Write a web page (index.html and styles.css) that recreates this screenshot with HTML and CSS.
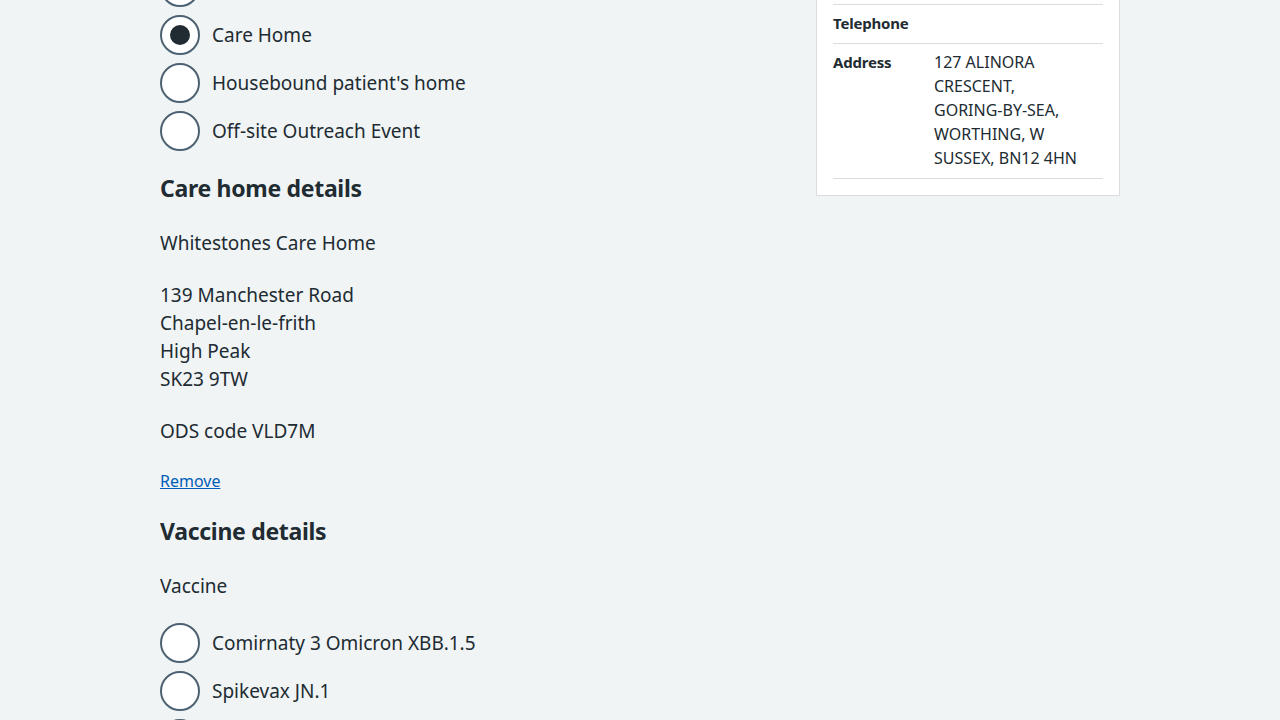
FILE: index.html
```html
<!DOCTYPE html>
<html lang="en">
<head>
<meta charset="utf-8">
<title>Record vaccination</title>
<link rel="stylesheet" href="styles.css">
</head>
<body>
<div class="container">
  <div class="layout">
    <main class="main">
      <div class="radios radios-top">
        <div class="radio"><span class="radio-input"></span><span class="radio-label">Clinic</span></div>
        <div class="radio"><span class="radio-input checked"></span><span class="radio-label">Care Home</span></div>
        <div class="radio"><span class="radio-input"></span><span class="radio-label">Housebound patient's home</span></div>
        <div class="radio"><span class="radio-input"></span><span class="radio-label">Off-site Outreach Event</span></div>
      </div>

      <h2 class="heading-m">Care home details</h2>
      <p class="body">Whitestones Care Home</p>
      <p class="body">139 Manchester Road<br>Chapel-en-le-frith<br>High Peak<br>SK23 9TW</p>
      <p class="body">ODS code VLD7M</p>
      <p class="body-s"><a href="#" class="link">Remove</a></p>

      <h2 class="heading-m heading-vaccine">Vaccine details</h2>
      <p class="label">Vaccine</p>
      <div class="radios">
        <div class="radio"><span class="radio-input"></span><span class="radio-label">Comirnaty 3 Omicron XBB.1.5</span></div>
        <div class="radio"><span class="radio-input"></span><span class="radio-label">Spikevax JN.1</span></div>
        <div class="radio"><span class="radio-input"></span><span class="radio-label">Comirnaty JN.1</span></div>
      </div>
    </main>
    <aside class="side">
      <div class="card">
        <dl class="summary">
          <div class="summary-row"><dt>Gender</dt><dd>Female</dd></div>
          <div class="summary-row"><dt>Telephone</dt><dd></dd></div>
          <div class="summary-row"><dt>Address</dt><dd>127 ALINORA<br>CRESCENT,<br>GORING-BY-SEA,<br>WORTHING, W<br>SUSSEX, BN12 4HN</dd></div>
        </dl>
      </div>
    </aside>
  </div>
</div>
</body>
</html>
```

FILE: styles.css
```css
* { box-sizing: border-box; }

html, body {
  margin: 0;
  padding: 0;
  background: #f0f4f5;
  color: #212b32;
  font-family: "Noto Sans", "Open Sans", "Liberation Sans", sans-serif;
  -webkit-font-smoothing: antialiased;
}

.container {
  max-width: 960px;
  margin: 0 auto;
}

.layout {
  display: grid;
  grid-template-columns: 1fr 304px;
  column-gap: 32px;
  align-items: start;
}

.radios {
  display: flex;
  flex-direction: column;
  gap: 8px;
}

.radios-top {
  margin-top: -33px;
}

.radio {
  display: flex;
  align-items: center;
  gap: 12px;
  height: 40px;
}

.radio-input {
  width: 40px;
  height: 40px;
  border: 2px solid #4c6272;
  border-radius: 50%;
  background: #fff;
  flex: none;
  display: flex;
  align-items: center;
  justify-content: center;
}

.radio-input.checked::after {
  content: "";
  width: 20px;
  height: 20px;
  border-radius: 50%;
  background: #212b32;
}

.radio-label {
  font-size: 19px;
  line-height: 28px;
}

.heading-m {
  font-size: 23px;
  line-height: 32px;
  font-weight: 700;
  letter-spacing: -0.3px;
  margin: 21px 0 25px;
}

.heading-vaccine {
  margin-top: 22px;
  margin-bottom: 25px;
}

.body {
  font-size: 19px;
  line-height: 28px;
  margin: 0 0 24px;
}

.body-s {
  font-size: 16px;
  line-height: 24px;
  margin: 0;
}

.label {
  font-size: 19px;
  line-height: 28px;
  margin: 0 0 23px;
}

.link {
  color: #005eb8;
  text-decoration: underline;
}

.card {
  background: #fff;
  border: 1px solid #d8dde0;
  padding: 16px;
  margin-top: -51px;
}

.summary {
  margin: 0;
  font-size: 16px;
  line-height: 24px;
}

.summary-row {
  display: grid;
  grid-template-columns: 101px 1fr;
  border-bottom: 1px solid #d8dde0;
  padding: 6px 0 8px;
}

.summary-row dt {
  font-weight: 700;
  font-size: 15px;
  letter-spacing: -0.2px;
}

.summary-row dd {
  margin: 0;
}
```
